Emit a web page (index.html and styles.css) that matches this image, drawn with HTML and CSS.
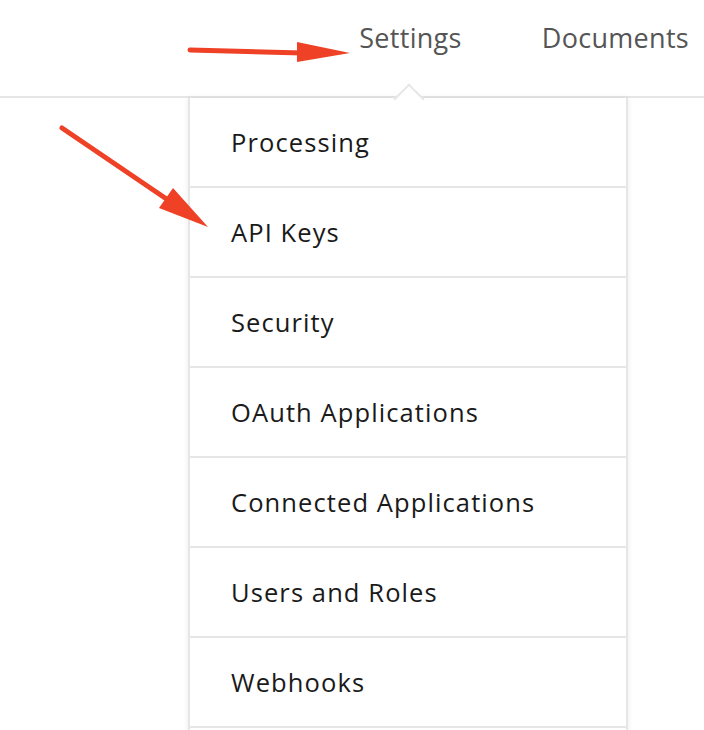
FILE: index.html
```html
<!DOCTYPE html>
<html>
<head>
<meta charset="utf-8">
<link rel="stylesheet" href="styles.css">
</head>
<body>
<header class="topbar">
  <nav class="nav">
    <span class="nav-link">Settings</span>
    <span class="nav-link">Documents</span>
  </nav>
</header>
<main class="content">
  <div class="dropdown">
    <span class="dropdown-caret"></span>
    <ul class="dropdown-list">
      <li class="dropdown-item">Processing</li>
      <li class="dropdown-item">API Keys</li>
      <li class="dropdown-item">Security</li>
      <li class="dropdown-item">OAuth Applications</li>
      <li class="dropdown-item">Connected Applications</li>
      <li class="dropdown-item">Users and Roles</li>
      <li class="dropdown-item">Webhooks</li>
      <li class="dropdown-item dropdown-item--blank"></li>
    </ul>
  </div>
</main>
<svg class="annot annot--top" width="180" height="30" viewBox="0 0 180 30">
  <line x1="4" y1="10" x2="116" y2="13" stroke="#ee4126" stroke-width="5" stroke-linecap="round"/>
  <polygon points="111,2 164,13 111,22" fill="#ee4126"/>
</svg>
<svg class="annot annot--side" width="170" height="130" viewBox="0 0 170 130">
  <line x1="4" y1="5" x2="110" y2="77" stroke="#ee4126" stroke-width="5" stroke-linecap="round"/>
  <polygon points="101,85 115,65 150,104" fill="#ee4126"/>
</svg>
</body>
</html>
```
FILE: styles.css
```css
body {
  margin: 0;
  padding: 0;
  background: #fff;
  font-family: "Open Sans", "Noto Sans", sans-serif;
  position: relative;
}
.topbar {
  height: 96px;
  border-bottom: 2px solid #e6e6e6;
  display: flex;
  justify-content: flex-end;
}
.nav {
  display: flex;
  align-items: flex-start;
  gap: 80px;
  padding: 19px 15px 0 0;
}
.nav-link {
  font-size: 27px;
  letter-spacing: 0.3px;
  color: #555;
  line-height: 38px;
}
.content {
  padding-left: 188px;
}
.dropdown {
  position: relative;
  width: 440px;
}
.dropdown-caret {
  position: absolute;
  top: -10px;
  left: 210px;
  width: 20px;
  height: 20px;
  background: #fff;
  border-top: 2px solid #e6e6e6;
  border-left: 2px solid #e6e6e6;
  transform: rotate(45deg);
  z-index: 1;
}
.dropdown-list {
  position: relative;
  list-style: none;
  margin: 0;
  padding: 0;
  background: #fff;
  border-left: 2px solid #e6e6e6;
  border-right: 2px solid #e6e6e6;
  box-shadow: 0 0 6px rgba(0,0,0,0.08);
}
.dropdown-item {
  height: 88px;
  display: flex;
  align-items: center;
  padding-left: 41px;
  font-size: 25.5px;
  letter-spacing: 1.1px;
  color: #1a1a1a;
  border-bottom: 2px solid #e6e6e6;
}
.annot {
  position: absolute;
  z-index: 5;
}
.annot--top {
  left: 186px;
  top: 40px;
}
.annot--side {
  left: 58px;
  top: 123px;
}
```
